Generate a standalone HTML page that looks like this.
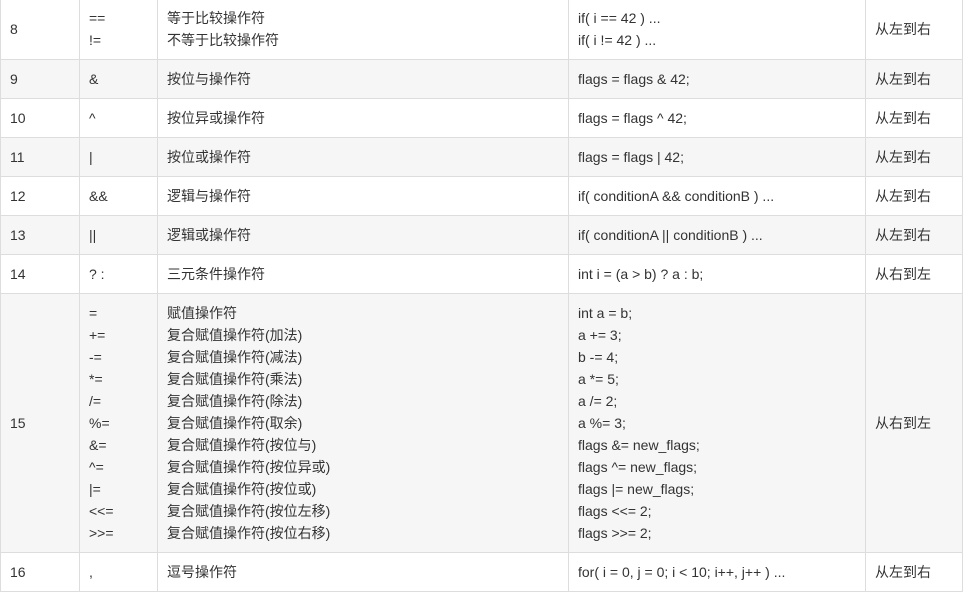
<!DOCTYPE html>
<html><head><meta charset="utf-8"><style>
body{margin:0;background:#fff;overflow:hidden;width:964px;height:590px}
table{position:absolute;left:0;top:-1px;border-collapse:collapse;table-layout:fixed;width:963px;font:14px/22px "Liberation Sans","Noto Sans CJK SC",sans-serif;color:#333}
td{border:1px solid #ddd;padding:8px 9px;vertical-align:middle;white-space:nowrap;overflow:hidden}
tr:first-child td{padding-top:7px}
tr:nth-child(even) td{background:#f6f6f6}
</style></head><body>
<table>
<colgroup><col style="width:79px"><col style="width:78px"><col style="width:411px"><col style="width:297px"><col style="width:97px"></colgroup>
<tr><td>8</td><td>==<br>!=</td><td>等于比较操作符<br>不等于比较操作符</td><td>if( i == 42 ) ...<br>if( i != 42 ) ...</td><td>从左到右</td></tr>
<tr><td>9</td><td>&amp;</td><td>按位与操作符</td><td>flags = flags &amp; 42;</td><td>从左到右</td></tr>
<tr><td>10</td><td>^</td><td>按位异或操作符</td><td>flags = flags ^ 42;</td><td>从左到右</td></tr>
<tr><td>11</td><td>|</td><td>按位或操作符</td><td>flags = flags | 42;</td><td>从左到右</td></tr>
<tr><td>12</td><td>&amp;&amp;</td><td>逻辑与操作符</td><td>if( conditionA &amp;&amp; conditionB ) ...</td><td>从左到右</td></tr>
<tr><td>13</td><td>||</td><td>逻辑或操作符</td><td>if( conditionA || conditionB ) ...</td><td>从左到右</td></tr>
<tr><td>14</td><td>? :</td><td>三元条件操作符</td><td>int i = (a &gt; b) ? a : b;</td><td>从右到左</td></tr>
<tr><td>15</td><td>=<br>+=<br>-=<br>*=<br>/=<br>%=<br>&amp;=<br>^=<br>|=<br>&lt;&lt;=<br>&gt;&gt;=</td><td>赋值操作符<br>复合赋值操作符(加法)<br>复合赋值操作符(减法)<br>复合赋值操作符(乘法)<br>复合赋值操作符(除法)<br>复合赋值操作符(取余)<br>复合赋值操作符(按位与)<br>复合赋值操作符(按位异或)<br>复合赋值操作符(按位或)<br>复合赋值操作符(按位左移)<br>复合赋值操作符(按位右移)</td><td>int a = b;<br>a += 3;<br>b -= 4;<br>a *= 5;<br>a /= 2;<br>a %= 3;<br>flags &amp;= new_flags;<br>flags ^= new_flags;<br>flags |= new_flags;<br>flags &lt;&lt;= 2;<br>flags &gt;&gt;= 2;</td><td>从右到左</td></tr>
<tr><td>16</td><td>,</td><td>逗号操作符</td><td>for( i = 0, j = 0; i &lt; 10; i++, j++ ) ...</td><td>从左到右</td></tr>
</table>
</body></html>
